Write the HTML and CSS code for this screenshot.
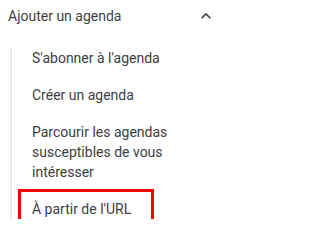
FILE: index.html
```html
<!DOCTYPE html>
<html lang="fr">
<head>
<meta charset="utf-8">
<link rel="stylesheet" href="styles.css">
</head>
<body>
<div class="panel">
  <div class="header">
    <span class="title">Ajouter un agenda</span>
    <svg class="chevron" width="20" height="20" viewBox="0 0 24 24" aria-hidden="true"><path d="M12 8l-6 6 1.41 1.41L12 10.83l4.59 4.58L18 14z" fill="currentColor"/></svg>
  </div>
  <ul class="sub">
    <li class="item">S'abonner à l'agenda</li>
    <li class="item">Créer un agenda</li>
    <li class="item">Parcourir les agendas susceptibles de vous intéresser</li>
    <li class="item highlight">À partir de l'URL</li>
  </ul>
</div>
</body>
</html>
```

FILE: styles.css
```css
html, body {
  margin: 0;
  padding: 0;
  background: #ffffff;
}
body {
  font-family: Roboto, "Noto Sans", "Liberation Sans", sans-serif;
  font-size: 14px;
  line-height: 20px;
  color: #3c4043;
}
.panel {
  width: 227px;
}
.header {
  display: flex;
  align-items: center;
  justify-content: space-between;
  height: 32px;
  padding: 0 11px 0 8px;
  box-sizing: border-box;
}
.title {
  line-height: 20px;
}
.chevron {
  display: block;
  color: #3c4043;
}
.sub {
  list-style: none;
  margin: 15px 0 0 10px;
  padding: 1px 0 0 20px;
  border-left: 2px solid #e8eaed;
  display: flex;
  flex-direction: column;
  gap: 17px;
  width: 150px;
}
.item {
  line-height: 20px;
}
.highlight {
  position: relative;
}
.highlight::after {
  content: "";
  position: absolute;
  top: -10px;
  bottom: -9px;
  left: -14px;
  right: 28px;
  border: 3px solid #ff0000;
}
```
